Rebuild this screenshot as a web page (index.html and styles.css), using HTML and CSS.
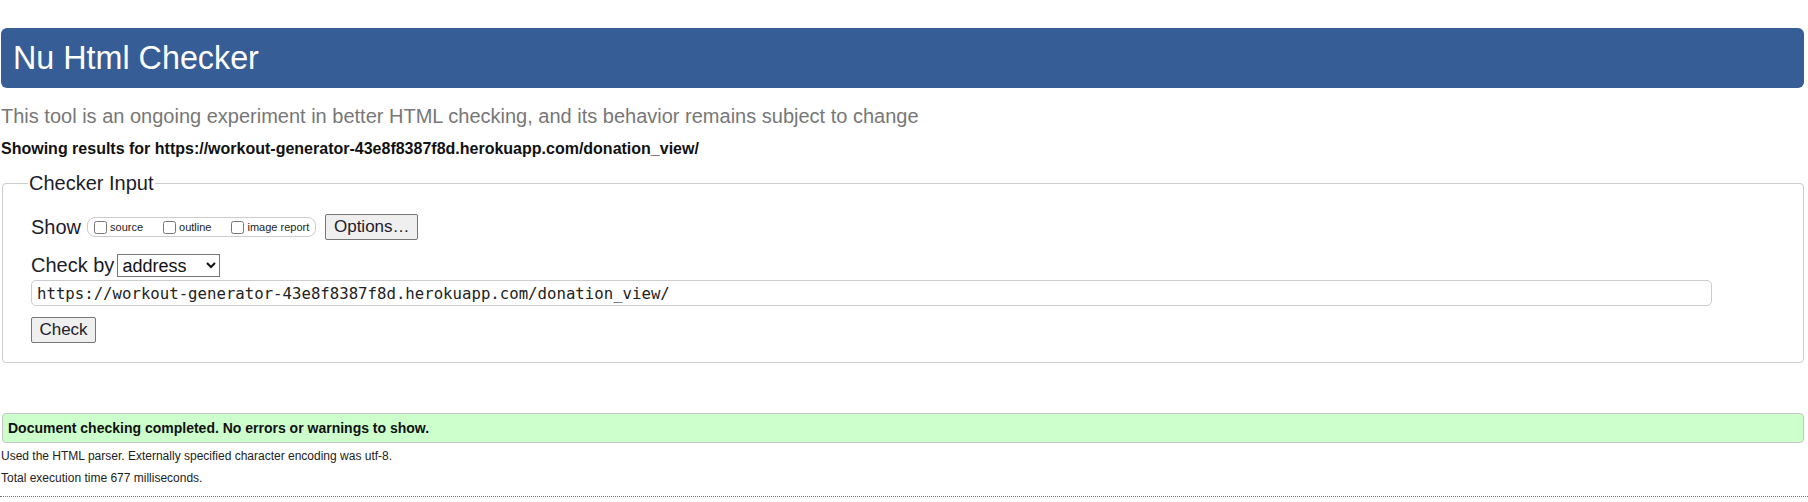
FILE: index.html
```html
<!DOCTYPE html>
<html lang="en">
<head>
<meta charset="utf-8">
<title>Nu Html Checker</title>
<link rel="stylesheet" href="styles.css">
</head>
<body>
<h1 class="title">Nu Html Checker</h1>
<p class="intro">This tool is an ongoing experiment in better HTML checking, and its behavior remains subject to change</p>
<p class="showing">Showing results for https://workout-generator-43e8f8387f8d.herokuapp.com/donation_view/</p>
<form class="form">
  <fieldset class="input-set">
    <legend class="legend">Checker Input</legend>
    <div class="row row-show">
      <span class="label">Show</span>
      <span class="opts">
        <label class="opt"><input type="checkbox" class="cb">source</label>
        <label class="opt"><input type="checkbox" class="cb">outline</label>
        <label class="opt"><input type="checkbox" class="cb">image report</label>
      </span>
      <button type="button" class="btn btn-options">Options…</button>
    </div>
    <div class="row row-by">
      <span class="label">Check by</span>
      <select class="select"><option>address</option></select>
    </div>
    <div class="row row-url">
      <input class="url" type="text" value="https://workout-generator-43e8f8387f8d.herokuapp.com/donation_view/">
    </div>
    <div class="row row-check">
      <button type="button" class="btn btn-check">Check</button>
    </div>
  </fieldset>
</form>
<p class="success">Document checking completed. No errors or warnings to show.</p>
<p class="details">Used the HTML parser. Externally specified character encoding was utf-8.</p>
<p class="details">Total execution time 677 milliseconds.</p>
<hr class="end">
</body>
</html>
```
FILE: styles.css
```css
html, body {
  margin: 0;
  padding: 0;
  background: #fff;
  color: #222;
  font-family: "Liberation Sans", Arial, sans-serif;
}

.title {
  margin: 28px 4px 0 1px;
  height: 60px;
  padding: 0 12px;
  box-sizing: border-box;
  background: #365d95;
  color: #fff;
  border-radius: 6px;
  font-size: 32.3px;
  font-weight: normal;
  line-height: 60px;
}

.intro {
  margin: 17px 0 0 1px;
  font-size: 20px;
  line-height: 22px;
  color: #777;
}

.showing {
  margin: 13px 0 0 1px;
  font-size: 16px;
  line-height: 18px;
  font-weight: bold;
  color: #111;
}

.form {
  margin: 15px 4px 0 2px;
}

.input-set {
  margin: 0;
  padding: 21px 24px 19px 28px;
  border: 1px solid #ccc;
  border-radius: 4px;
  min-width: 0;
}

.legend {
  margin-left: -3px;
  padding: 0 1px;
  font-size: 20px;
  line-height: 20px;
  color: #1c1c2c;
}

.row {
  display: flex;
  align-items: center;
}

.label {
  font-size: 20px;
  color: #1c1c2c;
}

.row-show {
  height: 26px;
}

.opts {
  display: flex;
  align-items: center;
  margin-left: 6px;
  height: 18px;
  border: 1px solid #ccc;
  border-radius: 8px;
  padding: 0 6px;
  font-size: 11px;
  color: #222;
}

.opt {
  display: flex;
  align-items: center;
  margin-right: 20px;
}

.opt:last-child {
  margin-right: 0;
}

.cb {
  margin: 0 3px 0 0;
  width: 13px;
  height: 13px;
}

.btn {
  font-family: "Liberation Sans", Arial, sans-serif;
  background: #efefef;
  border: 1px solid #767676;
  border-radius: 2px;
  color: #1c1c2c;
  height: 26px;
  padding: 0 6px;
}

.btn-options {
  margin-left: 9px;
  width: 93px;
  font-size: 17px;
}

.row-by {
  margin-top: 14px;
  height: 23px;
}

.select {
  margin-left: 3px;
  width: 103px;
  height: 23px;
  font-family: "Liberation Sans", Arial, sans-serif;
  font-size: 18px;
  color: #111;
  border: 1px solid #767676;
  border-radius: 0;
  background: #fff;
}

.row-url {
  margin-top: 3px;
  height: 26px;
}

.url {
  width: 1681px;
  height: 26px;
  box-sizing: border-box;
  border: 1px solid #ccc;
  border-radius: 5px;
  padding: 0 5px;
  font-family: "DejaVu Sans Mono", "Liberation Mono", monospace;
  font-size: 15.7px;
  color: #222;
}

.row-check {
  margin-top: 11px;
  height: 26px;
}

.btn-check {
  width: 65px;
  font-size: 17px;
}

.success {
  margin: 50px 4px 0 2px;
  height: 30px;
  box-sizing: border-box;
  padding: 0 5px;
  background: #ccffcc;
  border: 1px solid #c6c6c6;
  border-radius: 4px;
  font-size: 14px;
  line-height: 28px;
  font-weight: bold;
  color: #111;
}

.details {
  margin: 5px 0 0 1px;
  font-size: 12px;
  line-height: 16px;
  color: #222;
}

.details + .details {
  margin-top: 6px;
}

.end {
  margin: 10px 0 0 0;
  border: 0;
  border-top: 1px dotted #777;
  height: 0;
}
```
